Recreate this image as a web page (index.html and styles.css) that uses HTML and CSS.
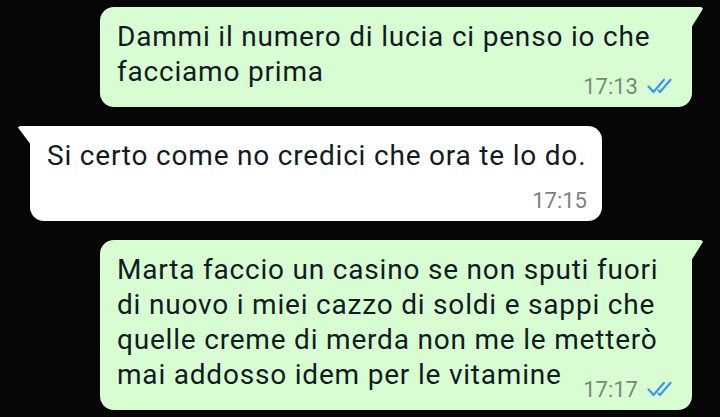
FILE: index.html
```html
<!DOCTYPE html>
<html lang="it">

<head>
  <meta charset="UTF-8">
  <meta name="viewport" content="width=device-width, initial-scale=1.0">
  <title>chat</title>
  <link rel="stylesheet" href="styles.css">
</head>

<body>
  <main class="chat">
    <div class="msg out">
      <p class="text">Dammi il numero di lucia ci penso io che facciamo prima<span class="meta">
          <span class="time">17:13</span>
          <svg class="ticks" width="26" height="16" viewBox="0 0 26 16">
            <path d="M1.5 8.5l5 5.5L17 1.8M11.5 12.5l1.5 1.5L23.5 1.8" fill="none" stroke="#3a97ec" stroke-width="2.2" stroke-linecap="round" stroke-linejoin="round"/>
          </svg>
        </span></p>
    </div>

    <div class="msg in">
      <p class="text">Si certo come no credici che ora te lo do.<span class="meta">
          <span class="time">17:15</span>
        </span></p>
    </div>

    <div class="msg out">
      <p class="text">Marta faccio un casino se non sputi fuori di nuovo i miei cazzo di soldi e sappi che quelle creme di merda non me le metterò mai addosso idem per le vitamine<span class="meta">
          <span class="time">17:17</span>
          <svg class="ticks" width="26" height="16" viewBox="0 0 26 16">
            <path d="M1.5 8.5l5 5.5L17 1.8M11.5 12.5l1.5 1.5L23.5 1.8" fill="none" stroke="#3a97ec" stroke-width="2.2" stroke-linecap="round" stroke-linejoin="round"/>
          </svg>
        </span></p>
    </div>
  </main>
</body>

</html>
```

FILE: styles.css
```css
* {
  box-sizing: border-box;
  margin: 0;
  padding: 0;
}

html,
body {
  height: 100%;
}

body {
  background: #060606;
  font-family: Roboto, "Noto Sans", "Liberation Sans", sans-serif;
  color: #111b21;
  overflow: hidden;
}

.chat {
  display: flex;
  flex-direction: column;
  gap: 19px;
  padding-top: 7px;
}

.msg {
  position: relative;
  padding: 12px 17px 8px;
  border-radius: 14px;
}

.msg .text {
  display: flow-root;
  font-size: 28px;
  letter-spacing: 0.8px;
  line-height: 35px;
}

/* outgoing */
.out {
  background: #d9fdd3;
  width: 592px;
  margin-left: 100px;
  border-top-right-radius: 0;
}

.out::after {
  content: '';
  position: absolute;
  top: 0;
  right: -11px;
  width: 12px;
  height: 21px;
  background: #d9fdd3;
  clip-path: polygon(0 0, 85% 0, 100% 8%, 0 100%);
}

/* incoming */
.in {
  background: #fff;
  width: 572px;
  margin-left: 30px;
  padding-right: 15px;
  border-top-left-radius: 0;
}

.in::after {
  content: '';
  position: absolute;
  top: 0;
  left: -12px;
  width: 13px;
  height: 19px;
  background: #fff;
  clip-path: polygon(15% 0, 100% 0, 100% 100%, 0 8%);
}

/* time + ticks, floated to the end of the last line */
.meta {
  float: right;
  display: flex;
  align-items: center;
  gap: 9px;
  height: 24px;
  margin: 21px 0 0 14px;
  letter-spacing: 0;
}

.in .meta {
  margin-top: 16px;
}

.time {
  font-size: 22px;
  line-height: 24px;
  color: #7a8877;
}

.in .time {
  color: #808080;
}

.ticks {
  margin-top: -2px;
  margin-right: 2px;
}
```
